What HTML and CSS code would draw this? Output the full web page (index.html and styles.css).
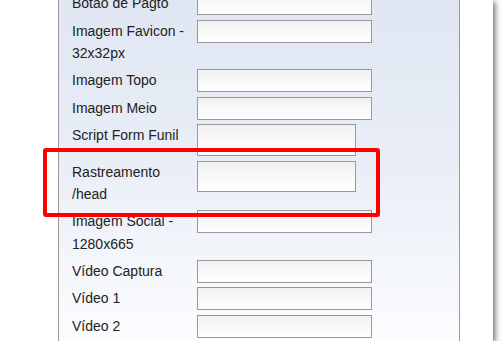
FILE: index.html
```html
<!DOCTYPE html>
<html lang="pt-BR">
<head>
    <meta charset="UTF-8">
    <title>Configurações</title>
    <link rel="stylesheet" href="styles.css">
</head>
<body>
    <div class="shot">
        <div class="panel">
            <table class="form">
                <tr>
                    <td class="label">Botao de Pagto</td>
                    <td><input type="text" class="field"></td>
                </tr>
                <tr>
                    <td class="label">Imagem Favicon - 32x32px</td>
                    <td><input type="text" class="field"></td>
                </tr>
                <tr>
                    <td class="label">Imagem Topo</td>
                    <td><input type="text" class="field"></td>
                </tr>
                <tr>
                    <td class="label">Imagem Meio</td>
                    <td><input type="text" class="field"></td>
                </tr>
                <tr>
                    <td class="label">Script Form Funil</td>
                    <td><textarea class="field area"></textarea></td>
                </tr>
                <tr>
                    <td class="label">Rastreamento /head</td>
                    <td><textarea class="field area area-short"></textarea></td>
                </tr>
                <tr>
                    <td class="label">Imagem Social - 1280x665</td>
                    <td><input type="text" class="field"></td>
                </tr>
                <tr>
                    <td class="label">Vídeo Captura</td>
                    <td><input type="text" class="field"></td>
                </tr>
                <tr>
                    <td class="label">Vídeo 1</td>
                    <td><input type="text" class="field"></td>
                </tr>
                <tr>
                    <td class="label">Vídeo 2</td>
                    <td><input type="text" class="field"></td>
                </tr>
            </table>
        </div>

        <!-- highlight annotation drawn over the form -->
        <div class="highlight"></div>
    </div>
</body>
</html>
```

FILE: styles.css
```css
body {
    margin: 0;
    background-color: #fff;
    font-family: "Liberation Sans", Arial, sans-serif;
}

.shot {
    position: relative;
    width: 493px;
    height: 341px;
    overflow: hidden;
    background-color: #fff;
    box-shadow: 2px 2px 6px rgba(0, 0, 0, 0.6);
}

.panel {
    margin-top: -10.3px;
    margin-left: 58px;
    width: 402px;
    height: 420px;
    padding-left: 13px;
    box-sizing: border-box;
    border-left: 1px solid #999;
    border-right: 1px solid #999;
    background: linear-gradient(to bottom, #dfe6f2 0px, #e9eef6 170px, #fbfcfe 350px, #fff 420px);
}

.form {
    border-collapse: collapse;
    border-spacing: 0;
}

.form td {
    padding: 2.35px 0;
    vertical-align: top;
}

.label {
    width: 125px;
    font-size: 14px;
    line-height: 22.3px;
    color: #222;
}

.field {
    display: block;
    box-sizing: border-box;
    width: 175px;
    height: 23px;
    margin: 0;
    padding: 0;
    border: 1px solid #999;
    border-radius: 0;
    background: linear-gradient(to bottom, #f1f1f1, #fff);
}

.area {
    width: 159px;
    height: 32px;
    resize: none;
}

.area-short {
    height: 31px;
}

.highlight {
    position: absolute;
    left: 43px;
    top: 148px;
    width: 337px;
    height: 69px;
    box-sizing: border-box;
    border: 4px solid #ff0000;
    border-radius: 3px;
}
```
